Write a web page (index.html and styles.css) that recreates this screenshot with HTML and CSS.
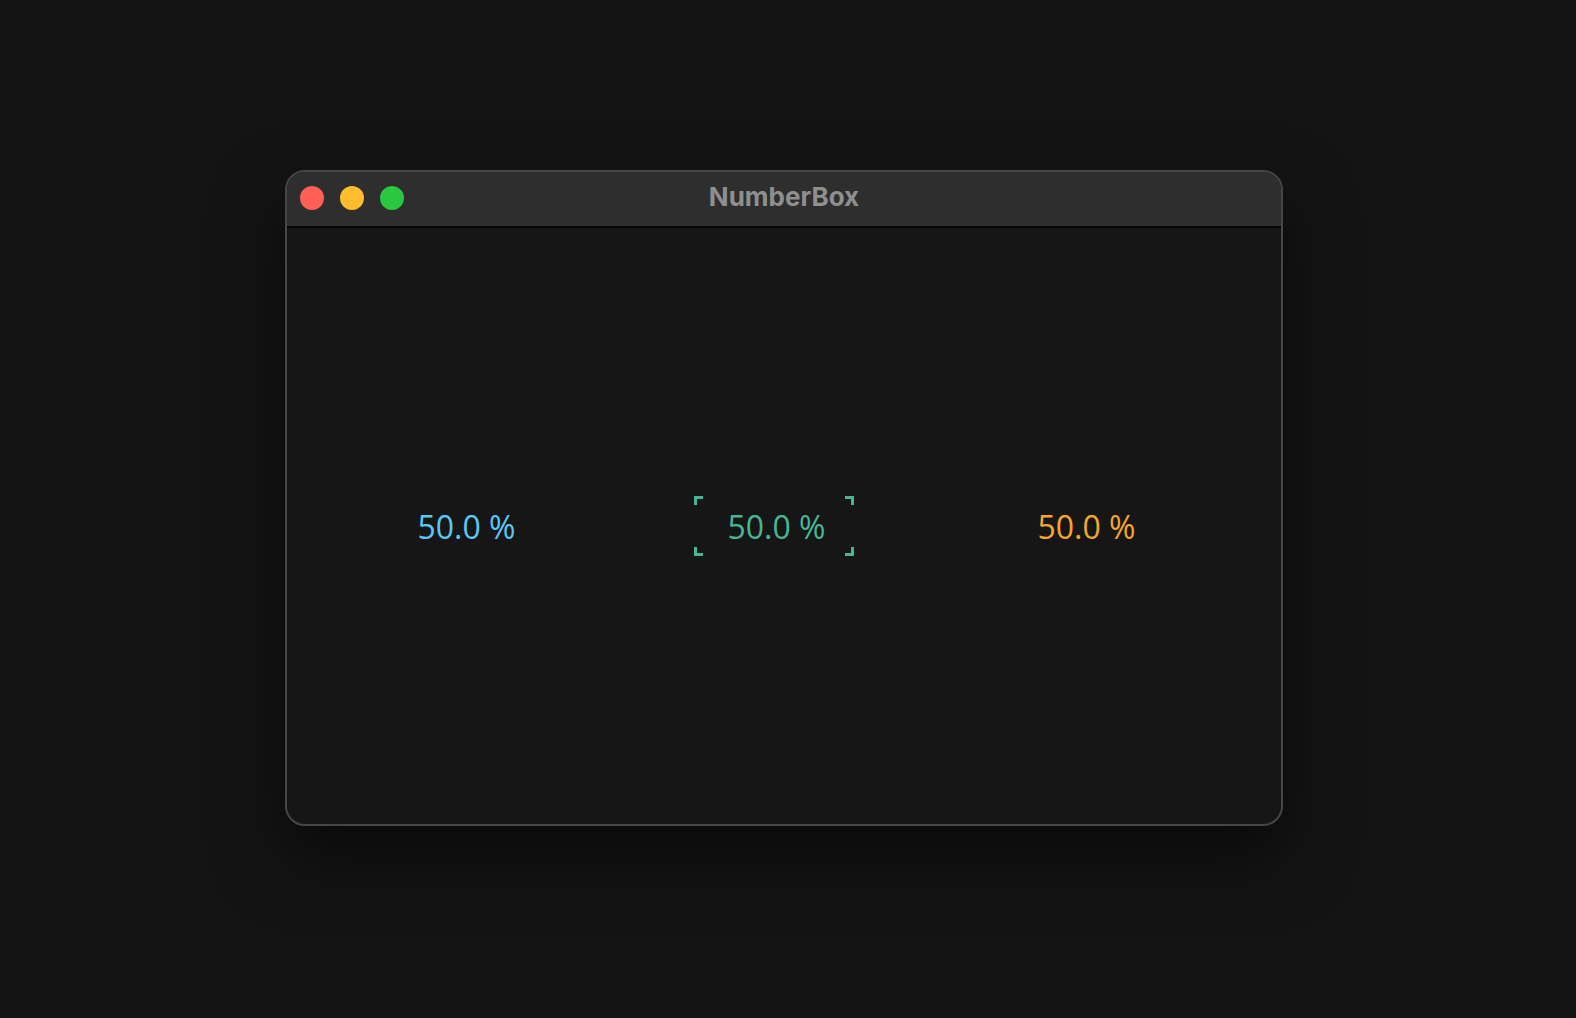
FILE: index.html
```html
<!DOCTYPE html>
<html lang="en">
<head>
    <meta charset="UTF-8">
    <meta name="viewport" content="width=device-width, initial-scale=1.0">
    <title>NumberBox</title>
    <link rel="stylesheet" href="styles.css">
</head>
<body>
    <div class="desktop">
        <div class="window">
            <div class="titlebar">
                <div class="lights">
                    <span class="light light-red"></span>
                    <span class="light light-yellow"></span>
                    <span class="light light-green"></span>
                </div>
                <div class="title">NumberBox</div>
            </div>
            <div class="content">
                <div class="row">
                    <div class="numberbox numberbox-blue">50.0 %</div>
                    <div class="numberbox numberbox-green numberbox-focused">50.0 %</div>
                    <div class="numberbox numberbox-orange">50.0 %</div>
                </div>
            </div>
        </div>
    </div>
</body>
</html>
```

FILE: styles.css
```css
body {
    margin: 0;
    background-color: #141414;
    font-family: "Open Sans", "Noto Sans", sans-serif;
}

.desktop {
    padding: 170px 0 0 285px;
    height: 848px;
}

/* Fenêtre */
.window {
    width: 994px;
    height: 652px;
    border: 2px solid #464646;
    border-radius: 20px;
    background-color: #161616;
    overflow: hidden;
    display: flex;
    flex-direction: column;
    box-shadow: 0 30px 70px rgba(0, 0, 0, 0.55);
}

.titlebar {
    height: 54px;
    background-color: #2e2e2e;
    border-bottom: 2px solid #050505;
    display: flex;
    align-items: center;
    position: relative;
}

.lights {
    display: flex;
    gap: 16px;
    padding-left: 13px;
    margin-top: -2px;
}

.light {
    width: 24px;
    height: 24px;
    border-radius: 50%;
}

.light-red { background-color: #ff5f57; }
.light-yellow { background-color: #febc2e; }
.light-green { background-color: #28c840; }

.title {
    position: absolute;
    left: 0;
    right: 0;
    top: 9px;
    text-align: center;
    font-family: Inter, "Liberation Sans", sans-serif;
    font-weight: 700;
    font-size: 26px;
    color: #8f8f8f;
    pointer-events: none;
}

/* Contenu */
.content {
    flex: 1;
    display: flex;
    align-items: center;
    justify-content: center;
}

.row {
    display: flex;
    gap: 150px;
    margin-right: 20px;
}

.numberbox {
    width: 160px;
    height: 60px;
    display: flex;
    align-items: center;
    justify-content: center;
    padding-left: 5px;
    font-size: 32px;
    font-weight: 500;
    box-sizing: border-box;
}

.numberbox-blue { color: #5ac8f5; }
.numberbox-green { color: #48b597; }
.numberbox-orange { color: #f5a62a; }

.numberbox-focused {
    background:
        linear-gradient(#48b597, #48b597) left top / 9px 3px no-repeat,
        linear-gradient(#48b597, #48b597) left top / 3px 9px no-repeat,
        linear-gradient(#48b597, #48b597) right top / 9px 3px no-repeat,
        linear-gradient(#48b597, #48b597) right top / 3px 9px no-repeat,
        linear-gradient(#48b597, #48b597) left bottom / 9px 3px no-repeat,
        linear-gradient(#48b597, #48b597) left bottom / 3px 9px no-repeat,
        linear-gradient(#48b597, #48b597) right bottom / 9px 3px no-repeat,
        linear-gradient(#48b597, #48b597) right bottom / 3px 9px no-repeat;
}
```
